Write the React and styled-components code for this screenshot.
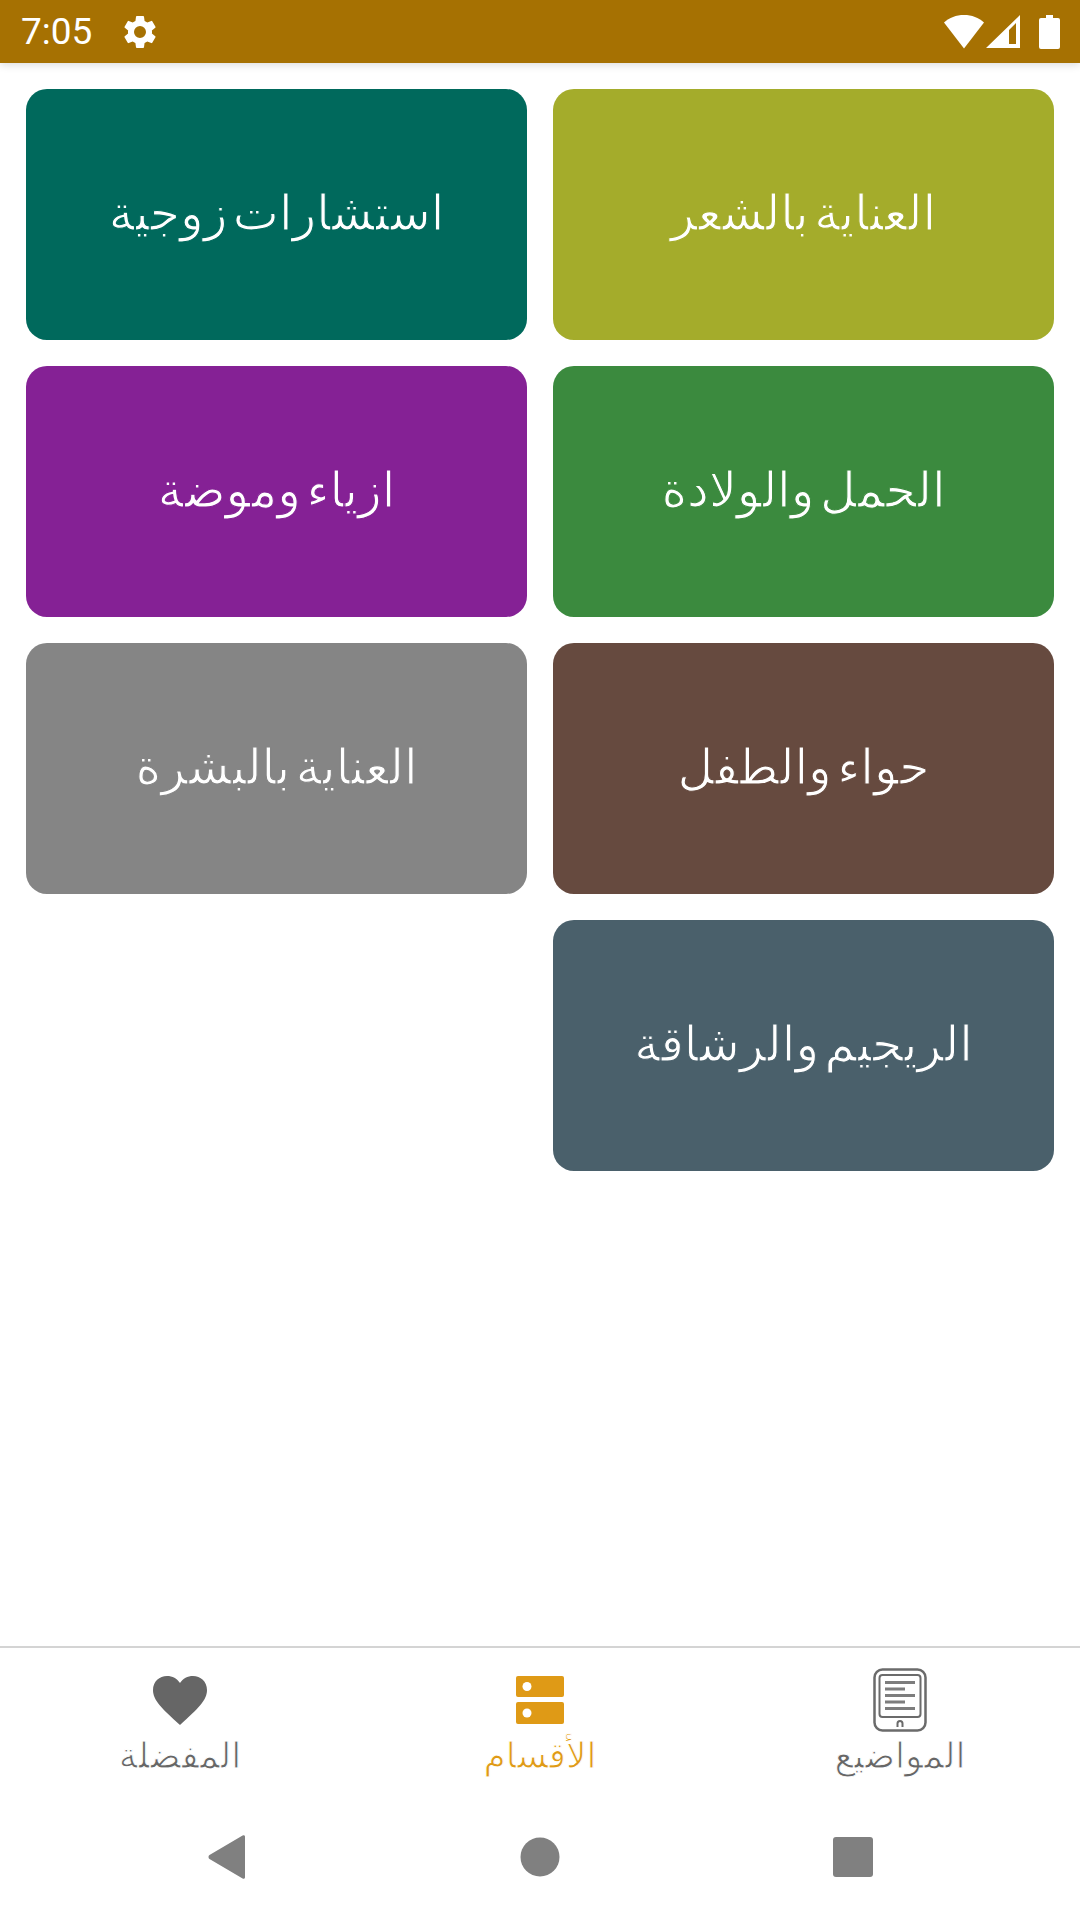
import React from "react";
import styled, { createGlobalStyle } from "styled-components";

const Global = createGlobalStyle`
  html, body { margin: 0; padding: 0; background: #fff; }
  * { box-sizing: border-box; }
`;

const Screen = styled.div`
  width: 1080px;
  height: 1920px;
  display: flex;
  flex-direction: column;
  overflow: hidden;
  background: #fff;
  font-family: "DejaVu Sans", "Noto Sans", sans-serif;
`;

const StatusBar = styled.header`
  height: 63px;
  flex: none;
  display: flex;
  align-items: center;
  padding: 0 20px 0 21px;
  background: #a67102;
  color: #fff;
  box-shadow: 0 2px 8px rgba(0, 0, 0, 0.14);
  position: relative;
  direction: ltr;
`;

const Clock = styled.span`
  font: 400 37px/63px Roboto, sans-serif;
  width: 99px;
`;

const StatusIcons = styled.div`
  margin-left: auto;
  display: flex;
  align-items: center;
  gap: 2px;
`;

const Categories = styled.main`
  flex: 1;
  direction: rtl;
  display: grid;
  grid-template-columns: 501px 501px;
  grid-auto-rows: 251px;
  gap: 26px;
  align-content: start;
  padding: 26px 26px 0;
`;

// The stroke in the card's own colour trims the glyphs to a lighter weight.
const Card = styled.a`
  display: flex;
  align-items: center;
  justify-content: center;
  border-radius: 21px;
  background: ${(p) => p.$color};
  color: #fff;
  font-size: 49px;
  word-spacing: -10px;
  -webkit-text-stroke: 1.1px ${(p) => p.$color};
  padding-bottom: 2px;
`;

const BottomNav = styled.nav`
  height: 154px;
  flex: none;
  direction: rtl;
  display: grid;
  grid-template-columns: repeat(3, 1fr);
  border-top: 2px solid #d4d4d4;
`;

const NavItem = styled.a`
  display: flex;
  flex-direction: column;
  align-items: center;
  color: ${(p) => (p.$active ? "#df9a16" : "#666")};
  font-size: 36px;
  line-height: 46px;
  -webkit-text-stroke: 1px #fff;
`;

const IconSlot = styled.div`
  height: 66px;
  margin-top: 19px;
  display: flex;
  align-items: center;
  justify-content: center;
`;

const SystemBar = styled.footer`
  height: 120px;
  flex: none;
  display: flex;
  gap: 273px;
  align-items: center;
  justify-content: center;
  padding-bottom: 6px;
`;

const HomeKeySlot = styled.span`
  display: flex;
  margin-left: 1px;
`;

const GearIcon = () => (
  <svg width="40" height="40" viewBox="0 0 24 24" fill="#fff">
    <path d="M19.14 12.94c.04-.3.06-.61.06-.94s-.02-.64-.07-.94l2.03-1.58a.49.49 0 0 0 .12-.61l-1.92-3.32a.49.49 0 0 0-.59-.22l-2.39.96a7 7 0 0 0-1.62-.94l-.36-2.54a.48.48 0 0 0-.48-.41h-3.84a.47.47 0 0 0-.47.41l-.36 2.54c-.59.24-1.13.57-1.62.94l-2.39-.96a.49.49 0 0 0-.59.22L2.74 8.87a.47.47 0 0 0 .12.61l2.03 1.58c-.05.3-.09.63-.09.94s.02.64.07.94l-2.03 1.58a.49.49 0 0 0-.12.61l1.92 3.32c.12.22.37.29.59.22l2.39-.96c.5.38 1.03.7 1.62.94l.36 2.54c.05.24.24.41.48.41h3.84c.24 0 .44-.17.47-.41l.36-2.54c.59-.24 1.13-.56 1.62-.94l2.39.96c.22.08.47 0 .59-.22l1.92-3.32a.47.47 0 0 0-.12-.61l-2.01-1.58zM12 15.6A3.6 3.6 0 1 1 12 8.400a3.600 3.600 0 0 1 0 7.200z" />
  </svg>
);

const WifiIcon = () => (
  <svg width="40" height="34" viewBox="0 0 40 34" fill="#fff">
    <path d="M20 0C12 0 5.500 2.600 0 7.500L20 33.500 40 7.500C34.500 2.600 28 0 20 0z" />
  </svg>
);

const SignalIcon = () => (
  <svg width="34" height="33" viewBox="0 0 34 33" fill="#fff">
    <path fillRule="evenodd" d="M34 0V33H0zM30 8 23 15V29H30z" />
  </svg>
);

const BatteryIcon = () => (
  <svg width="21" height="34" viewBox="0 0 21 34" fill="#fff" style={{ marginLeft: 17 }}>
    <path d="M7 0h7v3h5a2 2 0 0 1 2 2v27a2 2 0 0 1-2 2H2a2 2 0 0 1-2-2V5a2 2 0 0 1 2-2h5z" />
  </svg>
);

const ReaderIcon = () => (
  <svg width="54" height="64" viewBox="0 0 54 64" fill="none" stroke="#6b6b6b">
    <rect x="1.500" y="1.500" width="51" height="61" rx="8" strokeWidth="2.500" />
    <rect x="6.500" y="7" width="41" height="42" rx="3" strokeWidth="2" />
    <path d="M12 14.500h30M12 21h20M12 27.500h30M12 34h20M12 40.500h30" strokeWidth="2.800" stroke="#7d7d7d" />
    <path d="M24.500 59v-3.500a2.500 2.500 0 0 1 5 0V59" strokeWidth="2" />
  </svg>
);

const ShelfIcon = () => (
  <svg width="48" height="48" viewBox="0 0 48 48" fill="#df9a16">
    <rect x="0" y="0" width="48" height="21" rx="2" />
    <rect x="0" y="26" width="48" height="22" rx="2" />
    <circle cx="11" cy="10.500" r="4.500" fill="#fff" />
    <circle cx="11" cy="37" r="4.500" fill="#fff" />
  </svg>
);

const HeartIcon = () => (
  <svg width="54" height="49" viewBox="0 0 54 49" fill="#666">
    <path d="M27 49C9 32.500 0 24.500 0 14 0 5.500 6.500 0 14 0c5.500 0 10 2.500 13 7 3-4.500 7.500-7 13-7 7.500 0 14 5.500 14 14 0 10.500-9 18.500-27 35z" />
  </svg>
);

const BackKey = () => (
  <svg width="38" height="44" viewBox="0 0 38 44" fill="#808080">
    <path d="M37 1.500v41a1.500 1.500 0 0 1-2.400 1L1.500 24a2.500 2.500 0 0 1 0-4L34.600.500A1.500 1.500 0 0 1 37 1.500z" />
  </svg>
);

const HomeKey = () => (
  <svg width="40" height="40" viewBox="0 0 40 40" fill="#808080">
    <circle cx="20" cy="20" r="19.500" />
  </svg>
);

const RecentsKey = () => (
  <svg width="40" height="40" viewBox="0 0 40 40" fill="#808080">
    <rect width="40" height="40" rx="3" />
  </svg>
);

const categories = [
  ["العناية بالشعر", "#a4ac2b"],
  ["استشارات زوجية", "#00695c"],
  ["الحمل والولادة", "#3b8a3e"],
  ["ازياء وموضة", "#852195"],
  ["حواء والطفل", "#664a3f"],
  ["العناية بالبشرة", "#858585"],
  ["الريجيم والرشاقة", "#4a606b"],
];

const tabs = [
  { label: "المواضيع", icon: <ReaderIcon /> },
  { label: "الأقسام", icon: <ShelfIcon />, active: true },
  { label: "المفضلة", icon: <HeartIcon /> },
];

export default function App() {
  return (
    <Screen>
      <Global />
      <StatusBar>
        <Clock>7:05</Clock>
        <GearIcon />
        <StatusIcons>
          <WifiIcon />
          <SignalIcon />
          <BatteryIcon />
        </StatusIcons>
      </StatusBar>
      <Categories>
        {categories.map(([title, color]) => (
          <Card key={title} $color={color}>
            {title}
          </Card>
        ))}
      </Categories>
      <BottomNav>
        {tabs.map((t) => (
          <NavItem key={t.label} $active={t.active}>
            <IconSlot>{t.icon}</IconSlot>
            {t.label}
          </NavItem>
        ))}
      </BottomNav>
      <SystemBar>
        <BackKey />
        <HomeKeySlot>
          <HomeKey />
        </HomeKeySlot>
        <RecentsKey />
      </SystemBar>
    </Screen>
  );
}
